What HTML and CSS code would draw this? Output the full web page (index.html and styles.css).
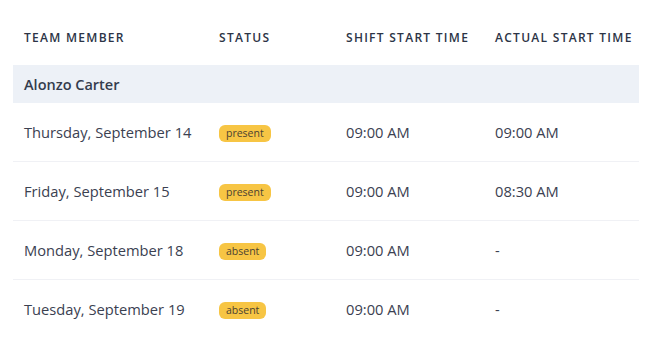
FILE: index.html
```html
<!DOCTYPE html>
<html>
<head>
<meta charset="utf-8">
<link rel="stylesheet" href="styles.css">
</head>
<body>
<div class="wrap">
<table class="tbl">
  <colgroup>
    <col class="c1"><col class="c2"><col class="c3"><col class="c4">
  </colgroup>
  <thead>
    <tr class="head">
      <th>TEAM MEMBER</th><th>STATUS</th><th>SHIFT START TIME</th><th>ACTUAL START TIME</th>
    </tr>
  </thead>
  <tbody>
    <tr class="group"><td colspan="4">Alonzo Carter</td></tr>
    <tr class="row"><td>Thursday, September 14</td><td><span class="badge">present</span></td><td>09:00 AM</td><td>09:00 AM</td></tr>
    <tr class="row"><td>Friday, September 15</td><td><span class="badge">present</span></td><td>09:00 AM</td><td>08:30 AM</td></tr>
    <tr class="row"><td>Monday, September 18</td><td><span class="badge">absent</span></td><td>09:00 AM</td><td>-</td></tr>
    <tr class="row last"><td>Tuesday, September 19</td><td><span class="badge">absent</span></td><td>09:00 AM</td><td>-</td></tr>
  </tbody>
</table>
</div>
</body>
</html>
```

FILE: styles.css
```css
html, body { margin: 0; padding: 0; background: #ffffff; }
body { font-family: "Open Sans", "Liberation Sans", sans-serif; color: #3b4151; }
.wrap { padding: 10px 11px 0 13px; }
.tbl { width: 626px; border-collapse: collapse; table-layout: fixed; }
.c1 { width: 195px; }
.c2 { width: 127px; }
.c3 { width: 149px; }
.c4 { width: 155px; }
.head th {
  height: 55px; padding: 0 0 0 11px; text-align: left; vertical-align: middle;
  font-size: 12px; font-weight: 600; letter-spacing: 1.28px; color: #2c3446;
  white-space: nowrap;
}
.group td {
  height: 38px; padding: 0 0 0 11px; background: #edf1f7;
  font-size: 14.5px; font-weight: 600; color: #343c4d;
}
.row td {
  height: 57px; padding: 0 0 1px 11px; font-size: 14.7px; color: #3b4151;
  border-bottom: 1px solid #f0f1f5; vertical-align: middle; white-space: nowrap;
}
.row.last td { border-bottom: none; }
.badge {
  display: inline-block; background: #f7c544; color: #4b4232;
  font-size: 10.5px; line-height: 13px; padding: 2px 7px; border-radius: 6px;
}
```
